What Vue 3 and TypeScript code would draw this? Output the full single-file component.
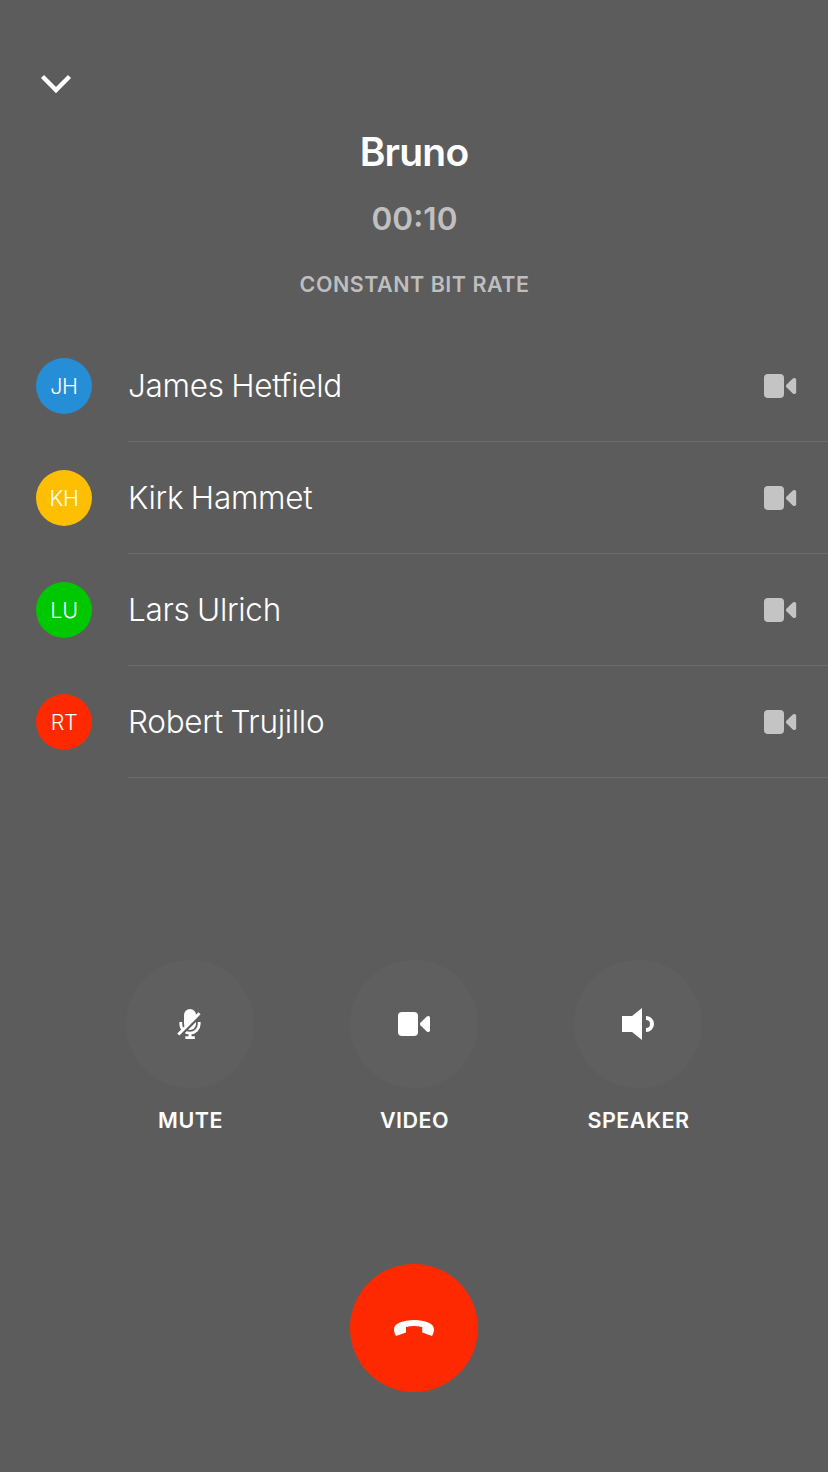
<script setup lang="ts">
interface Participant {
  name: string
  initials: string
  tone: string
}

const participants: Participant[] = [
  { name: 'James Hetfield', initials: 'JH', tone: 'blue' },
  { name: 'Kirk Hammet', initials: 'KH', tone: 'yellow' },
  { name: 'Lars Ulrich', initials: 'LU', tone: 'green' },
  { name: 'Robert Trujillo', initials: 'RT', tone: 'red' },
]
</script>

<template>
  <main class="call">
    <header class="header">
      <button class="minimize" aria-label="Minimize">
        <svg width="32" height="20" viewBox="0 0 32 20">
          <path d="M2.500 2.500 16 16.100 29.500 2.500" fill="none" stroke="#fff" stroke-width="4.300" />
        </svg>
      </button>
      <h1 class="title">Bruno</h1>
      <p class="timer">00:10</p>
      <p class="bitrate">CONSTANT BIT RATE</p>
    </header>

    <ul class="people">
      <li v-for="p in participants" :key="p.initials" class="person">
        <span class="avatar" :class="p.tone">{{ p.initials }}</span>
        <div class="details">
          <span class="name">{{ p.name }}</span>
          <svg class="camera" width="33" height="24" viewBox="0 0 33 24">
            <rect width="20" height="24" rx="4" />
            <path d="M22.400 10.800 28.800 4.600Q29.500 4 30.500 4Q32.200 4 32.200 5.700V18.300Q32.200 20 30.500 20Q29.500 20 28.800 19.400L22.400 13.200Q21.400 12 22.400 10.800Z" />
          </svg>
        </div>
      </li>
    </ul>

    <section class="actions">
      <div class="action">
        <button class="round" aria-label="Mute">
          <svg width="32" height="32" viewBox="0 0 32 32">
            <defs>
              <mask id="slash-gap">
                <rect width="32" height="32" fill="#fff" />
                <path d="M3 30.500 30 3.500" stroke="#000" stroke-width="3.400" />
              </mask>
            </defs>
            <g mask="url(#slash-gap)">
              <path d="M10 7a6 6 0 0 1 12 0v9a6 6 0 0 1-12 0Z" />
              <path d="M6.800 14v2a9.200 9.200 0 0 0 18.400 0v-2" fill="none" stroke="#fff" stroke-width="2.800" />
            </g>
            <path d="M14.500 25h3v3.200h3.300V31H11.300v-2.800h3.200Z" />
            <path d="M4.300 26.500 25.500 5.300" stroke="#fff" stroke-width="3" />
          </svg>
        </button>
        <span class="label">MUTE</span>
      </div>
      <div class="action">
        <button class="round" aria-label="Video">
          <svg width="32" height="24" viewBox="0 0 32 24">
            <rect width="20" height="24" rx="4" />
            <path d="M22.400 10.800 28.800 4.600Q29.500 4 30.500 4Q32 4 32 5.700V18.300Q32 20 30.500 20Q29.500 20 28.800 19.400L22.400 13.200Q21.400 12 22.400 10.800Z" />
          </svg>
        </button>
        <span class="label">VIDEO</span>
      </div>
      <div class="action">
        <button class="round" aria-label="Speaker">
          <svg width="32" height="32" viewBox="0 0 32 32">
            <path d="M0 8H10L20 0V32L10 24H0Z" />
            <path d="M24 10a6 6 0 0 1 0 12" fill="none" stroke="#fff" stroke-width="4" />
          </svg>
        </button>
        <span class="label">SPEAKER</span>
      </div>
    </section>

    <footer class="footer">
      <button class="round hangup" aria-label="End call">
        <svg width="40" height="16" viewBox="0 0 40 16">
          <path d="M0 9C0 3.500 9 0 20 0S40 3.500 40 9C40 11.800 39.200 14 38 16L28.200 12.400V7Q20 4.800 12 7V12.400L2 16C.8 14 0 11.800 0 9Z" />
        </svg>
      </button>
    </footer>
  </main>
</template>

<style>
body {
  margin: 0;
  background: #5c5c5c;
}
</style>

<style scoped>
.call {
  box-sizing: border-box;
  width: 828px;
  height: 1472px;
  display: flex;
  flex-direction: column;
  background: #5c5c5c;
  color: #fff;
  font-family: Inter, "Liberation Sans", sans-serif;
  overflow: hidden;
}
button {
  border: 0;
  padding: 0;
  background: none;
}
svg {
  display: block;
  fill: #fff;
}
.header {
  height: 330px;
  box-sizing: border-box;
  padding-top: 74px;
  display: flex;
  flex-direction: column;
  align-items: center;
}
.minimize {
  align-self: flex-start;
  margin-left: 40px;
}
h1, p {
  margin: 0;
}
.title {
  margin-top: 34px;
  font-size: 39px;
  line-height: 48px;
  font-weight: 600;
  letter-spacing: -0.8px;
}
.timer {
  margin-top: 23px;
  padding-left: 1px;
  font-size: 31.5px;
  line-height: 40px;
  font-weight: 600;
  letter-spacing: 0.1px;
  font-feature-settings: "case", "calt";
  color: #c0c0c0;
}
.bitrate {
  margin-top: 31px;
  padding-left: 1px;
  font-size: 21.5px;
  line-height: 28px;
  font-weight: 600;
  letter-spacing: 0.5px;
  color: #bebebe;
}
.people {
  margin: 0;
  padding: 0 0 0 36px;
  list-style: none;
}
.person {
  height: 112px;
  display: flex;
  align-items: center;
  gap: 36px;
}
.avatar {
  width: 56px;
  height: 56px;
  border-radius: 50%;
  flex: none;
  text-align: center;
  font-size: 21.5px;
  line-height: 57px;
  font-weight: 300;
  letter-spacing: -0.3px;
}
.blue { background: #258ed6; }
.yellow { background: #febf02; }
.green { background: #00c800; }
.red { background: #ff2900; }
.details {
  flex: 1;
  height: 112px;
  box-sizing: border-box;
  border-bottom: 1px solid #6c6c6c;
  padding-right: 31px;
  display: flex;
  align-items: center;
  justify-content: space-between;
}
.name {
  font-size: 31.5px;
  line-height: 40px;
  font-weight: 300;
  letter-spacing: -0.3px;
  word-spacing: -1px;
}
.camera {
  fill: #c4c4c4;
}
.actions {
  margin-top: 182px;
  display: flex;
  justify-content: center;
  gap: 96px;
}
.action {
  width: 128px;
  display: flex;
  flex-direction: column;
  align-items: center;
}
.round {
  width: 128px;
  height: 128px;
  border-radius: 50%;
  background: #5f5f5f;
  display: flex;
  align-items: center;
  justify-content: center;
}
.label {
  margin-top: 18px;
  padding-left: 1px;
  font-size: 21.5px;
  line-height: 28px;
  font-weight: 600;
  letter-spacing: 0.5px;
}
.footer {
  margin-top: 130px;
  display: flex;
  justify-content: center;
}
.hangup {
  background: #ff2900;
}
</style>
